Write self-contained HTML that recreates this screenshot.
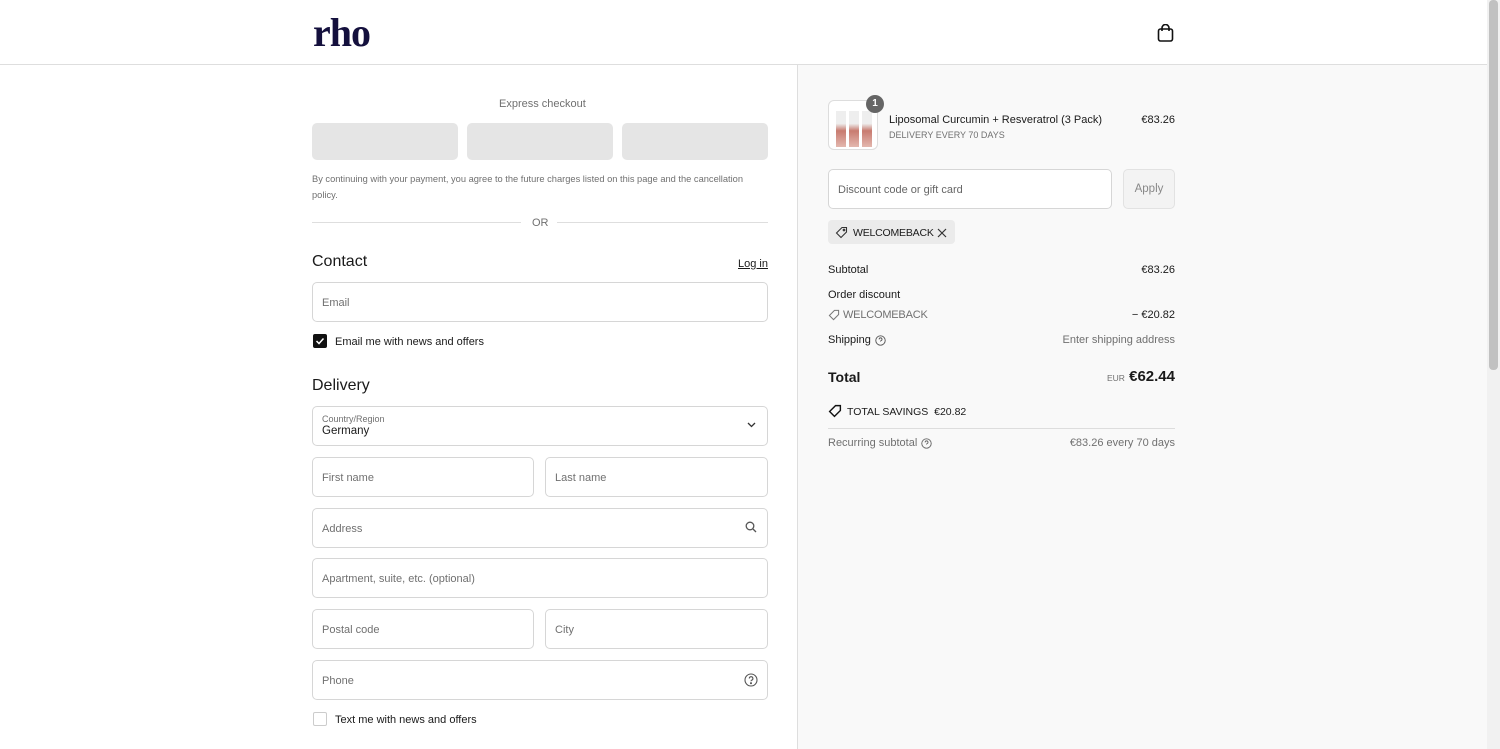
<!DOCTYPE html>
<html><head><meta charset="utf-8"><style>
*{box-sizing:border-box;margin:0;padding:0}
body{width:1500px;height:749px;overflow:hidden;font-family:"Liberation Sans",sans-serif;color:#1a1a1a;background:#fff;position:relative}
.hdr{position:absolute;left:0;top:0;width:1487px;height:65px;border-bottom:1px solid #dedede;background:#fff}
.logo{position:absolute;left:313px;top:9px;font-family:"Liberation Serif",serif;font-size:40px;font-weight:bold;color:#14103d;letter-spacing:-1px}
.right{position:absolute;left:797px;top:65px;width:690px;height:684px;background:#f9f9f9;border-left:1px solid #dedede}
.sb{position:absolute;left:1487px;top:0;width:13px;height:749px;background:#f1f1f1}
.sb div{position:absolute;left:2px;top:0;width:9px;height:370px;background:#c1c1c1;border-radius:4px}
.a{position:absolute;font-size:11px;white-space:nowrap}
.r{right:325px}
.btn{position:absolute;top:123px;width:146px;height:37px;background:#e5e5e5;border-radius:5px}
.in{position:absolute;border:1px solid #d6d6d6;border-radius:5px;background:#fff;height:40px;font-size:11px;color:#707070;padding:14px 9px}
.g{color:#707070}
</style></head><body>
<div class="hdr"><div class="logo">rho</div>
<svg style="position:absolute;left:1157px;top:24px" width="17" height="18" viewBox="0 0 17 18" fill="none" stroke="#111" stroke-width="1.6"><rect x="1.5" y="5" width="14" height="12" rx="2"/><path d="M5 7V4a3.5 3.5 0 0 1 7 0v3"/></svg></div>
<div class="sb"><div></div></div>

<div class="a g" style="left:499px;top:98px;font-size:11px">Express checkout</div>
<div class="btn" style="left:312px"></div><div class="btn" style="left:467px"></div><div class="btn" style="left:622px"></div>
<div class="a g" style="left:312px;top:171px;font-size:9.3px;line-height:16px;white-space:normal;width:440px">By continuing with your payment, you agree to the future charges listed on this page and the cancellation policy.</div>
<div style="position:absolute;left:312px;top:222px;width:209px;height:1px;background:#dedede"></div>
<div style="position:absolute;left:557px;top:222px;width:211px;height:1px;background:#dedede"></div>
<div class="a g" style="left:532px;top:217px;font-size:11px">OR</div>

<div class="a" style="left:312px;top:253px;font-size:16px">Contact</div>
<div class="a" style="left:738px;top:258px;font-size:11px;text-decoration:underline">Log in</div>
<div class="in" style="left:312px;top:282px;width:456px">Email</div>
<div style="position:absolute;left:313px;top:334px;width:14px;height:14px;background:#111;border-radius:2px"><svg width="14" height="14" viewBox="0 0 14 14"><path d="M3.5 7l2.5 2.5 4.5-5" stroke="#fff" stroke-width="1.5" fill="none"/></svg></div>
<div class="a" style="left:335px;top:336px;font-size:11px">Email me with news and offers</div>

<div class="a" style="left:312px;top:377px;font-size:16px">Delivery</div>
<div class="in" style="left:312px;top:406px;width:456px;padding:7px 9px"><div style="font-size:9px">Country/Region</div><div style="color:#1a1a1a;font-size:11.5px;margin-top:1px">Germany</div></div>
<svg style="position:absolute;left:747px;top:422px" width="9" height="6" viewBox="0 0 9 6"><path d="M1 1l3.5 3.5L8 1" stroke="#333" stroke-width="1.3" fill="none"/></svg>
<div class="in" style="left:312px;top:457px;width:222px">First name</div>
<div class="in" style="left:545px;top:457px;width:223px">Last name</div>
<div class="in" style="left:312px;top:508px;width:456px">Address</div>
<svg style="position:absolute;left:745px;top:521px" width="12" height="12" viewBox="0 0 12 12" fill="none" stroke="#555" stroke-width="1.3"><circle cx="5" cy="5" r="3.8"/><path d="M8 8l3 3"/></svg>
<div class="in" style="left:312px;top:558px;width:456px">Apartment, suite, etc. (optional)</div>
<div class="in" style="left:312px;top:609px;width:222px">Postal code</div>
<div class="in" style="left:545px;top:609px;width:223px">City</div>
<div class="in" style="left:312px;top:660px;width:456px">Phone</div>
<svg style="position:absolute;left:744px;top:673px" width="14" height="14" viewBox="0 0 14 14" fill="none" stroke="#555" stroke-width="1.1"><circle cx="7" cy="7" r="6"/><path d="M5.3 5.5a1.8 1.8 0 1 1 2.3 1.7c-.5.2-.6.5-.6 1.1"/><circle cx="7" cy="10.2" r=".5" fill="#555"/></svg>
<div style="position:absolute;left:313px;top:712px;width:14px;height:14px;border:1px solid #ccc;border-radius:2px"></div>
<div class="a" style="left:335px;top:714px;font-size:11px">Text me with news and offers</div>

<div class="right"></div>
<div style="position:absolute;left:828px;top:100px;width:50px;height:50px;border:1px solid #ddd;border-radius:6px;background:#fff;overflow:hidden">
<div style="position:absolute;left:7px;top:10px;width:10px;height:36px;background:linear-gradient(#eee 35%,#c87b70 55%,#e3b7ae)"></div>
<div style="position:absolute;left:20px;top:10px;width:10px;height:36px;background:linear-gradient(#eee 35%,#c87b70 55%,#e3b7ae)"></div>
<div style="position:absolute;left:33px;top:10px;width:10px;height:36px;background:linear-gradient(#eee 35%,#c87b70 55%,#e3b7ae)"></div></div>
<div style="position:absolute;left:866px;top:95px;width:18px;height:18px;border-radius:9px;background:#666;color:#fff;font-size:10px;font-weight:bold;text-align:center;line-height:18px">1</div>
<div class="a" style="left:889px;top:114px;font-size:11px">Liposomal Curcumin + Resveratrol (3 Pack)</div>
<div class="a g" style="left:889px;top:130px;font-size:9px">DELIVERY EVERY 70 DAYS</div>
<div class="a r" style="top:114px">€83.26</div>
<div class="in" style="left:828px;top:169px;width:284px;height:40px;padding:14px 9px;color:#666">Discount code or gift card</div>
<div style="position:absolute;left:1123px;top:169px;width:52px;height:40px;border:1px solid #e2e2e2;border-radius:5px;background:#f3f3f3;color:#888;font-size:11.5px;text-align:center;line-height:38px">Apply</div>
<div style="position:absolute;left:828px;top:220px;width:127px;height:24px;background:#ebebeb;border-radius:4px"></div>
<svg style="position:absolute;left:835px;top:226px" width="13" height="13" viewBox="0 0 13 13" fill="none" stroke="#333" stroke-width="1.1"><path d="M7 1.5h4.5V6L6 11.5 1.5 7z"/><circle cx="9" cy="4" r=".8"/></svg>
<div class="a" style="left:853px;top:227px;font-size:10.5px;letter-spacing:-.2px">WELCOMEBACK</div>
<svg style="position:absolute;left:937px;top:228px" width="10" height="10" viewBox="0 0 10 10" stroke="#333" stroke-width="1.2"><path d="M1 1l8 8M9 1l-8 8"/></svg>
<div class="a" style="left:828px;top:264px">Subtotal</div>
<div class="a r" style="top:264px">€83.26</div>
<div class="a" style="left:828px;top:289px">Order discount</div>
<svg style="position:absolute;left:828px;top:309px" width="12" height="12" viewBox="0 0 13 13" fill="none" stroke="#777" stroke-width="1.1"><path d="M7 1.5h4.5V6L6 11.5 1.5 7z"/></svg>
<div class="a g" style="left:843px;top:309px;letter-spacing:-.2px">WELCOMEBACK</div>
<div class="a r" style="top:309px">− €20.82</div>
<div class="a" style="left:828px;top:334px">Shipping</div>
<svg style="position:absolute;left:875px;top:335px" width="11" height="11" viewBox="0 0 14 14" fill="none" stroke="#555" stroke-width="1.2"><circle cx="7" cy="7" r="6"/><path d="M5.3 5.5a1.8 1.8 0 1 1 2.3 1.7c-.5.2-.6.5-.6 1.1"/></svg>
<div class="a g r" style="top:334px">Enter shipping address</div>
<div class="a" style="left:828px;top:369px;font-size:14px;font-weight:bold">Total</div>
<div class="a g" style="left:1107px;top:373px;font-size:8.5px">EUR</div>
<div class="a r" style="top:368px;font-size:15px;font-weight:bold">€62.44</div>
<svg style="position:absolute;left:828px;top:404px" width="14" height="14" viewBox="0 0 13 13" fill="none" stroke="#111" stroke-width="1.3"><path d="M7 1.5h4.5V6L6 11.5 1.5 7z"/></svg>
<div class="a" style="left:847px;top:406px;font-size:10.5px">TOTAL SAVINGS &nbsp;€20.82</div>
<div style="position:absolute;left:828px;top:428px;width:347px;height:1px;background:#ddd"></div>
<div class="a g" style="left:828px;top:437px">Recurring subtotal</div>
<svg style="position:absolute;left:921px;top:438px" width="11" height="11" viewBox="0 0 14 14" fill="none" stroke="#666" stroke-width="1.2"><circle cx="7" cy="7" r="6"/><path d="M5.3 5.5a1.8 1.8 0 1 1 2.3 1.7c-.5.2-.6.5-.6 1.1"/></svg>
<div class="a g r" style="top:437px">€83.26 every 70 days</div>
</body></html>
